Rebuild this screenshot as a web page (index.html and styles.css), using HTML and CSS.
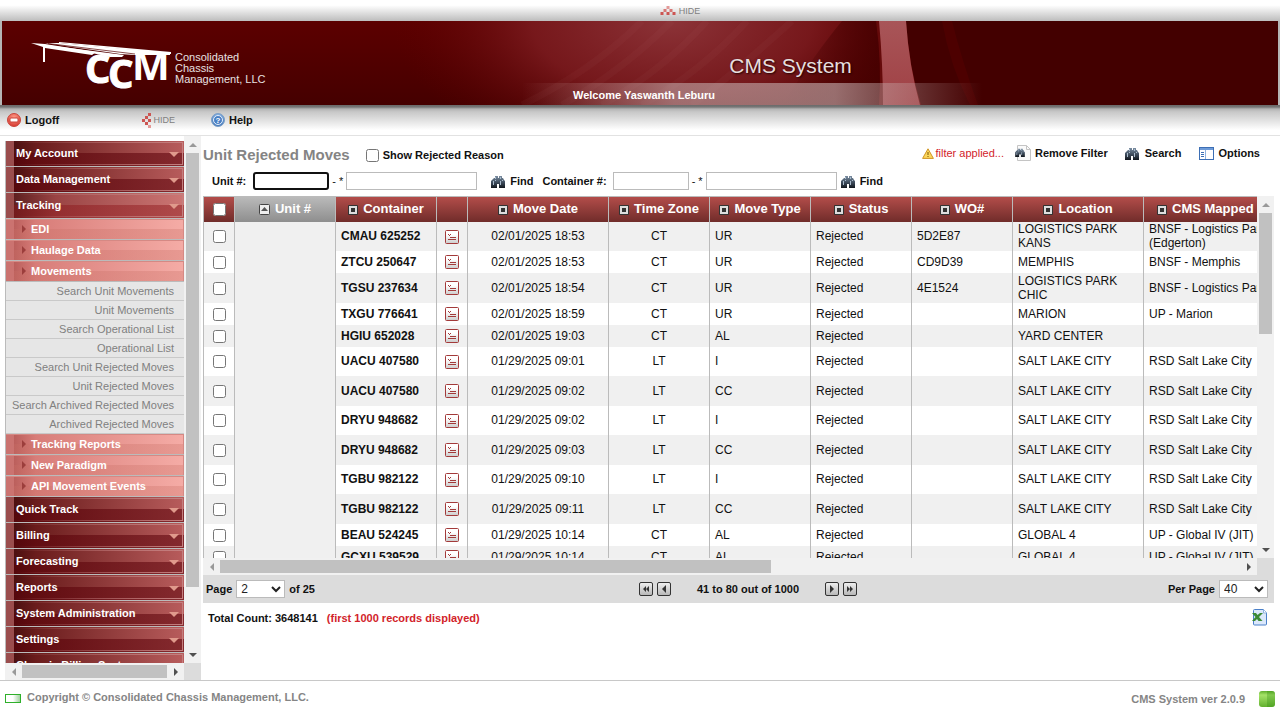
FILE: index.html
```html
<!DOCTYPE html>
<html lang="en">
<head>
<meta charset="utf-8">
<title>CMS System - Unit Rejected Moves</title>
<link rel="stylesheet" href="styles.css">
</head>
<body>
<svg class="defs" aria-hidden="true">
  <defs>
    <linearGradient id="gBin" x1="0" y1="0" x2="0" y2="1"><stop offset="0" stop-color="#7c8fa3"/><stop offset=".55" stop-color="#3c4a5a"/><stop offset="1" stop-color="#10151b"/></linearGradient>
    <linearGradient id="gPaper" x1="0" y1="0" x2="0" y2="1"><stop offset=".3" stop-color="#fff"/><stop offset="1" stop-color="#ccc"/></linearGradient>
    <radialGradient id="gRed" cx=".5" cy=".3" r=".7"><stop offset="0" stop-color="#ff9a88"/><stop offset="1" stop-color="#d63a30"/></radialGradient>
    <radialGradient id="gBlue" cx=".5" cy=".3" r=".7"><stop offset="0" stop-color="#9cc3ee"/><stop offset="1" stop-color="#3d74b8"/></radialGradient>
  </defs>
  <symbol id="bin" viewBox="0 0 14 13">
    <path fill="url(#gBin)" d="M4 1h3v2h1V1h3v2h1l1 2 1 1v7H8V9H6v4H0V6l1-1 2-2h1z"/>
    <path fill="#a9bacb" d="M4 2h1v2H4zM9 2h1v2H9zM2 6h1v4H2zM9 6h1v4H9zM4 5h1v1H4zM11 5h1v1h-1z"/>
    <path fill="#fff" d="M6 10h2v3H6z"/>
  </symbol>
  <symbol id="note" viewBox="0 0 14 14">
    <rect x=".5" y=".5" width="13" height="13" rx="1" fill="url(#gPaper)" stroke="#a33a3a"/>
    <path d="M3 4.500h1M5 4.500h1M4 5.500h1M5 7.500h6M3 9.500h8" stroke="#a33a3a"/>
  </symbol>
  <symbol id="sort" viewBox="0 0 10 10">
    <rect width="10" height="10" rx="1" fill="#333"/><rect x="1" y="1" width="8" height="8" fill="#ddd"/><rect x="3" y="3" width="4" height="4" fill="#333"/>
  </symbol>
</svg>

<div class="topbar">
  <button class="hide-btn" type="button"><svg width="16" height="9" viewBox="0 0 15 9" fill="#cc5552"><path d="M6 0h3v3H6z" fill="#e39a98"/><path d="M3 3h3v3H3zM9 3h3v3H9z" fill="#d77876"/><path d="M0 6h3v3H0zM6 6h3v3H6zM12 6h3v3h-3z"/></svg>HIDE</button>
</div>

<header class="banner">
  <svg class="banner-art" viewBox="0 0 1276 84" preserveAspectRatio="none" aria-hidden="true">
    <defs>
      <linearGradient id="bBase" x1="0" y1="0" x2="0" y2="1"><stop offset="0" stop-color="#5c0000"/><stop offset="1" stop-color="#450000"/></linearGradient>
      <radialGradient id="bGlow" cx=".5" cy=".5" r=".5"><stop offset="0" stop-color="#8c3338"/><stop offset=".5" stop-color="#7c1c20" stop-opacity=".85"/><stop offset="1" stop-color="#600000" stop-opacity="0"/></radialGradient>
      <linearGradient id="bRight" x1="0" x2="1"><stop offset="0" stop-color="#430000" stop-opacity="0"/><stop offset=".25" stop-color="#430000"/><stop offset="1" stop-color="#430000"/></linearGradient>
      <linearGradient id="bBar" x1="0" x2="1"><stop offset="0" stop-color="#c9a5a5" stop-opacity="0"/><stop offset=".33" stop-color="#c9b5b5" stop-opacity=".55"/><stop offset=".68" stop-color="#c9b5b5" stop-opacity=".6"/><stop offset="1" stop-color="#c9b5b5" stop-opacity="0"/></linearGradient>
      <linearGradient id="bRib" x1="0" y1="0" x2="0" y2="1"><stop offset="0" stop-color="#a85558"/><stop offset="1" stop-color="#a04044"/></linearGradient>
    </defs>
    <rect width="1276" height="84" fill="url(#bBase)"/>
    <ellipse cx="670" cy="0" rx="280" ry="150" fill="url(#bGlow)"/>
    <g fill="none" stroke="#c07074" stroke-opacity=".06" stroke-width="7"><path d="M640 0Q590 50 520 84M670 0Q620 50 560 84M705 0Q660 50 600 84M745 0Q700 50 640 84M790 0Q735 50 690 84"/></g>
    <path d="M780 84Q815 30 840 0H1276V84z" fill="url(#bRight)"/>
    <path d="M874 0h30q3 45 15 84h-42q3-40-3-84z" fill="#650a0a"/>
    <path d="M877 0h27q3 45 14 84h-37q0-40-4-84z" fill="url(#bRib)"/>
    <path d="M940 0q8 45 28 84h8Q960 40 950 0z" fill="#5c0000" opacity=".4"/>
    <rect x="520" y="62" width="460" height="22" fill="url(#bBar)"/>
  </svg>
  <svg class="logo" viewBox="0 0 250 64" role="img" aria-label="CCM">
    <g fill="#fff">
      <path d="M1 12 15 13 66 21 62 24 15 17v14h-2V16z"/>
      <path d="M15 12 30 12 140 22v2H104L90 23z"/>
      <path d="M16 14 94 24 92 26H80L62 22 16 16z"/>
      <path d="M29 11 141 21v2L29 12z"/>
      <path d="M18 12.500 105 23" stroke="#560000" stroke-width=".7"/>
      <g class="logo-letters"><text x="55" y="52">C</text><text x="78" y="57">C</text></g>
      <text class="logo-m" x="102" y="49">M</text>
    </g>
    <g class="logo-name"><text x="145" y="30">Consolidated</text><text x="145" y="41">Chassis</text><text x="145" y="52">Management, LLC</text></g>
  </svg>
  <div class="system-name">CMS System</div>
  <div class="welcome">Welcome Yaswanth Leburu</div>
</header>

<nav class="toolbar">
  <div class="toolbar-side">
    <a class="tool" href="#"><svg width="14" height="14" viewBox="0 0 14 14"><circle cx="7" cy="7" r="6.500" fill="url(#gRed)" stroke="#c9453b"/><rect x="3" y="5" width="8" height="4" rx="1" fill="#fff" stroke="#c9453b"/></svg>Logoff</a>
    <button class="hide-btn" type="button"><svg width="9" height="15" viewBox="0 0 9 15" fill="#cc5552"><path d="M0 6h3v3H0z"/><path d="M3 3h3v3H3zM3 9h3v3H3z"/><path d="M6 0h3v3H6zM6 6h3v3H6z"/><path d="M6 12h3v3H6z" fill="#e39a98"/></svg>HIDE</button>
  </div>
  <a class="tool" href="#"><svg width="14" height="14" viewBox="0 0 14 14"><circle cx="7" cy="7" r="6.500" fill="url(#gBlue)" stroke="#7d9fc6"/><circle cx="7" cy="7" r="4.500" fill="#4a80c4" stroke="#e6effa"/><text x="7" y="10" class="q">?</text></svg>Help</a>
</nav>

<div class="body">
  <aside class="sidebar">
    <div class="menu-view">
      <nav class="menu">
        <button class="top" type="button">My Account</button>
        <button class="top" type="button">Data Management</button>
        <button class="top open" type="button">Tracking</button>
        <button class="sub" type="button">EDI</button>
        <button class="sub" type="button">Haulage Data</button>
        <button class="sub" type="button">Movements</button>
        <a href="#">Search Unit Movements</a>
        <a href="#">Unit Movements</a>
        <a href="#">Search Operational List</a>
        <a href="#">Operational List</a>
        <a href="#">Search Unit Rejected Moves</a>
        <a href="#">Unit Rejected Moves</a>
        <a href="#">Search Archived Rejected Moves</a>
        <a href="#">Archived Rejected Moves</a>
        <button class="sub" type="button">Tracking Reports</button>
        <button class="sub" type="button">New Paradigm</button>
        <button class="sub" type="button">API Movement Events</button>
        <button class="top" type="button">Quick Track</button>
        <button class="top" type="button">Billing</button>
        <button class="top" type="button">Forecasting</button>
        <button class="top" type="button">Reports</button>
        <button class="top" type="button">System Administration</button>
        <button class="top" type="button">Settings</button>
        <button class="top" type="button">Chassis Billing System</button>
      </nav>
    </div>
    <div class="vbar"><i class="up dim"></i><span class="track side-v"><b></b></span><i class="down"></i></div>
    <div class="hbar"><i class="left dim"></i><span class="track side-h"><b></b></span><i class="right"></i></div>
    <div class="corner"></div>
  </aside>

  <main>
    <div class="heading">
      <h1>Unit Rejected Moves</h1>
      <label class="show"><input type="checkbox">Show Rejected Reason</label>
      <div class="actions">
        <span class="filter"><svg width="12" height="11" viewBox="0 0 12 11"><path d="M6 .8 11.400 10.400H.6z" fill="#fbd75b" stroke="#cf9426"/><path d="M5.500 4h1v3h-1zM5.500 8h1v1h-1z" fill="#7a5200"/></svg>filter applied...</span>
        <a class="act-remove" href="#"><svg width="16" height="16" viewBox="0 0 16 16"><path d="M2.500.5h9l4 4v11h-13z" fill="#fafafa" stroke="#c4c4c4"/><path d="M11.500.5v4h4" fill="none" stroke="#c4c4c4"/><use href="#bin" x="0" y="3" width="10" height="9"/></svg>Remove Filter</a>
        <a class="act-search" href="#"><svg width="14" height="13"><use href="#bin"/></svg>Search</a>
        <a class="act-options" href="#"><svg width="15" height="13" viewBox="0 0 15 13"><rect x=".5" y=".5" width="14" height="12" fill="#fff" stroke="#3d6fb5"/><path d="M1 1h13v2H1z" fill="#6e9bd8"/><path d="M6.500 3v9" stroke="#8fb2e0"/><path d="M2 5.500h3M2 7.500h3M2 9.500h3" stroke="#3d6fb5"/></svg>Options</a>
      </div>
    </div>
    <form class="finder">
      <label for="u1">Unit #:</label><input class="short focus" id="u1" type="text"><span>- *</span><input class="long" type="text" aria-label="Unit number">
      <button class="find gap" type="button"><svg width="14" height="13"><use href="#bin"/></svg>Find</button>
      <label class="c-label" for="c1">Container #:</label><input class="short" id="c1" type="text"><span>- *</span><input class="long" type="text" aria-label="Container number">
      <button class="find" type="button"><svg width="14" height="13"><use href="#bin"/></svg>Find</button>
    </form>

    <div class="grid">
      <div class="grid-view">
        <table>
          <colgroup><col class="w-check"><col class="w-std"><col class="w-std"><col class="w-note"><col class="w-date"><col class="w-std"><col class="w-std"><col class="w-std"><col class="w-std"><col class="w-loc"><col class="w-map"></colgroup>
          <thead><tr>
            <th><input type="checkbox" aria-label="Select all"></th>
            <th class="sorted"><svg width="11" height="11" viewBox="0 0 11 11"><rect x=".5" y=".5" width="10" height="10" rx="1" fill="#eee" stroke="#444"/><path d="M2 7 5.500 3 9 7z" fill="#555"/></svg>Unit #</th>
            <th><svg width="10" height="10"><use href="#sort"/></svg>Container</th>
            <th></th>
            <th><svg width="10" height="10"><use href="#sort"/></svg>Move Date</th>
            <th><svg width="10" height="10"><use href="#sort"/></svg>Time Zone</th>
            <th><svg width="10" height="10"><use href="#sort"/></svg>Move Type</th>
            <th><svg width="10" height="10"><use href="#sort"/></svg>Status</th>
            <th><svg width="10" height="10"><use href="#sort"/></svg>WO#</th>
            <th><svg width="10" height="10"><use href="#sort"/></svg>Location</th>
            <th class="mapped"><svg width="10" height="10"><use href="#sort"/></svg>CMS Mapped</th>
          </tr></thead>
          <tbody>
            <tr class="h29"><td><input type="checkbox" aria-label="Select row"></td><td></td><td>CMAU 625252</td><td><svg width="14" height="14"><use href="#note"/></svg></td><td>02/01/2025 18:53</td><td>CT</td><td>UR</td><td>Rejected</td><td>5D2E87</td><td>LOGISTICS PARK KANS</td><td>BNSF - Logistics Park<br>(Edgerton)</td></tr>
            <tr><td><input type="checkbox" aria-label="Select row"></td><td></td><td>ZTCU 250647</td><td><svg width="14" height="14"><use href="#note"/></svg></td><td>02/01/2025 18:53</td><td>CT</td><td>UR</td><td>Rejected</td><td>CD9D39</td><td>MEMPHIS</td><td>BNSF - Memphis</td></tr>
            <tr class="h30"><td><input type="checkbox" aria-label="Select row"></td><td></td><td>TGSU 237634</td><td><svg width="14" height="14"><use href="#note"/></svg></td><td>02/01/2025 18:54</td><td>CT</td><td>UR</td><td>Rejected</td><td>4E1524</td><td>LOGISTICS PARK CHIC</td><td>BNSF - Logistics Park</td></tr>
            <tr><td><input type="checkbox" aria-label="Select row"></td><td></td><td>TXGU 776641</td><td><svg width="14" height="14"><use href="#note"/></svg></td><td>02/01/2025 18:59</td><td>CT</td><td>UR</td><td>Rejected</td><td></td><td>MARION</td><td>UP - Marion</td></tr>
            <tr><td><input type="checkbox" aria-label="Select row"></td><td></td><td>HGIU 652028</td><td><svg width="14" height="14"><use href="#note"/></svg></td><td>02/01/2025 19:03</td><td>CT</td><td>AL</td><td>Rejected</td><td></td><td>YARD CENTER</td><td></td></tr>
            <tr class="h29"><td><input type="checkbox" aria-label="Select row"></td><td></td><td>UACU 407580</td><td><svg width="14" height="14"><use href="#note"/></svg></td><td>01/29/2025 09:01</td><td>LT</td><td>I</td><td>Rejected</td><td></td><td>SALT LAKE CITY</td><td>RSD Salt Lake City</td></tr>
            <tr class="h30"><td><input type="checkbox" aria-label="Select row"></td><td></td><td>UACU 407580</td><td><svg width="14" height="14"><use href="#note"/></svg></td><td>01/29/2025 09:02</td><td>LT</td><td>CC</td><td>Rejected</td><td></td><td>SALT LAKE CITY</td><td>RSD Salt Lake City</td></tr>
            <tr class="h29"><td><input type="checkbox" aria-label="Select row"></td><td></td><td>DRYU 948682</td><td><svg width="14" height="14"><use href="#note"/></svg></td><td>01/29/2025 09:02</td><td>LT</td><td>I</td><td>Rejected</td><td></td><td>SALT LAKE CITY</td><td>RSD Salt Lake City</td></tr>
            <tr class="h30"><td><input type="checkbox" aria-label="Select row"></td><td></td><td>DRYU 948682</td><td><svg width="14" height="14"><use href="#note"/></svg></td><td>01/29/2025 09:03</td><td>LT</td><td>CC</td><td>Rejected</td><td></td><td>SALT LAKE CITY</td><td>RSD Salt Lake City</td></tr>
            <tr class="h29"><td><input type="checkbox" aria-label="Select row"></td><td></td><td>TGBU 982122</td><td><svg width="14" height="14"><use href="#note"/></svg></td><td>01/29/2025 09:10</td><td>LT</td><td>I</td><td>Rejected</td><td></td><td>SALT LAKE CITY</td><td>RSD Salt Lake City</td></tr>
            <tr class="h30"><td><input type="checkbox" aria-label="Select row"></td><td></td><td>TGBU 982122</td><td><svg width="14" height="14"><use href="#note"/></svg></td><td>01/29/2025 09:11</td><td>LT</td><td>CC</td><td>Rejected</td><td></td><td>SALT LAKE CITY</td><td>RSD Salt Lake City</td></tr>
            <tr><td><input type="checkbox" aria-label="Select row"></td><td></td><td>BEAU 524245</td><td><svg width="14" height="14"><use href="#note"/></svg></td><td>01/29/2025 10:14</td><td>CT</td><td>AL</td><td>Rejected</td><td></td><td>GLOBAL 4</td><td>UP - Global IV (JIT)</td></tr>
            <tr><td><input type="checkbox" aria-label="Select row"></td><td></td><td>GCXU 539529</td><td><svg width="14" height="14"><use href="#note"/></svg></td><td>01/29/2025 10:14</td><td>CT</td><td>AL</td><td>Rejected</td><td></td><td>GLOBAL 4</td><td>UP - Global IV (JIT)</td></tr>
          </tbody>
        </table>
      </div>
      <div class="vbar"><i class="up dim"></i><span class="track grid-v"><b></b></span><i class="down"></i></div>
      <div class="hbar"><i class="left dim"></i><span class="track grid-h"><b></b></span><i class="right"></i></div>
      <div class="corner"></div>
    </div>

    <div class="pager">
      <div class="page-pick"><label for="pg">Page</label><select id="pg"><option>2</option></select><span>of 25</span></div>
      <div class="page-nav">
        <button type="button" aria-label="First page"><svg width="8" height="8" viewBox="0 0 8 8"><path d="M4 1v6L1 4zM7 1v6L4 4z"/></svg></button>
        <button type="button" aria-label="Previous page"><svg width="8" height="8" viewBox="0 0 8 8"><path d="M6 0v8L2 4z"/></svg></button>
        <span>41 to 80 out of 1000</span>
        <button type="button" aria-label="Next page"><svg width="8" height="8" viewBox="0 0 8 8"><path d="M2 0v8l4-4z"/></svg></button>
        <button type="button" aria-label="Last page"><svg width="8" height="8" viewBox="0 0 8 8"><path d="M1 1v6l3-3zM4 1v6l3-3z"/></svg></button>
      </div>
      <div class="per-page"><label for="pp">Per Page</label><select id="pp"><option>40</option></select></div>
    </div>

    <div class="totals">
      <span>Total Count: 3648141</span><span class="note">(first 1000 records displayed)</span>
      <a href="#" aria-label="Export to Excel"><svg width="16" height="17" viewBox="0 0 16 17"><path d="M1.500 1.500Q1.500.5 2.500.5h9l3 3.500v11q0 1-1 1h-11q-1 0-1-1z" fill="#dbe8fb" stroke="#4a80c9"/><path d="M11.500.5v3.500h3" fill="#fff" stroke="#8fb2e0"/><path d="M0 4h4l1.500 2L8 4h3L7 8l3.500 4h-4L5 10l-2 2H0l3.500-4z" fill="#3c8a35"/></svg></a>
    </div>
  </main>
</div>

<footer>
  <svg width="16" height="9" viewBox="0 0 16 9"><defs><linearGradient id="gBat"><stop offset=".5" stop-color="#fff"/><stop offset="1" stop-color="#9ccf9a"/></linearGradient></defs><rect x=".5" y=".5" width="15" height="8" fill="url(#gBat)" stroke="#2fb02b"/></svg>
  <span class="copyright">Copyright © Consolidated Chassis Management, LLC.</span>
  <span class="version">CMS System ver 2.0.9</span>
  <svg width="16" height="16" viewBox="0 0 16 16"><defs><linearGradient id="gOk" x1="0" y1="0" x2="0" y2="1"><stop offset="0" stop-color="#5fae2c"/><stop offset=".25" stop-color="#a5e368"/><stop offset="1" stop-color="#62b02f"/></linearGradient></defs><rect width="16" height="16" rx="3" fill="url(#gOk)"/><path d="M8 0h5q3 0 3 3v10q0 3-3 3H8z" fill="#2d8a10" opacity=".3"/></svg>
</footer>
</body>
</html>
```

FILE: styles.css
```css
* { box-sizing: border-box; }
body {
  margin: 0;
  min-height: 100vh;
  display: flex;
  flex-direction: column;
  background: #fff;
  color: #111;
  font: bold 11px/14px "Liberation Sans", Arial, sans-serif;
}
a { color: inherit; text-decoration: none; }
button { font: inherit; color: inherit; background: none; border: 0; padding: 0; }
svg { display: block; flex: none; }
.defs { position: absolute; width: 0; height: 0; }

/* top bar and banner */
.topbar {
  height: 21px;
  display: flex;
  justify-content: center;
  align-items: center;
  padding-left: 80px;
  background: linear-gradient(#fff 25%, #bdbdbd);
}
.hide-btn { display: flex; align-items: center; gap: 3px; color: #808080; font-weight: normal; font-size: 9px; }
.banner {
  position: relative;
  display: grid;
  grid-template-rows: 62px 22px;
  margin: 0 2px;
  box-shadow: 0 0 0 2px #b5b5b5;
  clip-path: inset(0 -2px);
  color: #fff;
}
.banner > * { position: relative; }
.banner > .banner-art { position: absolute; width: 100%; height: 100%; }
.logo { grid-area: 1 / 1 / 3 / 2; width: 250px; height: 64px; margin: 10px 0 0 28px; overflow: visible; }
.logo-letters { font: bold 40px "Open Sans", sans-serif; stroke: #fff; stroke-width: 1px; }
.logo-m { font: bold 40px "Open Sans", sans-serif; }
.logo-name { font: 11px "Liberation Sans", sans-serif; fill: #e8e0e0; }
.system-name {
  grid-area: 1 / 1 / 2 / 2;
  margin-left: 57%;
  padding-top: 33px;
  font-weight: normal;
  font-size: 21px;
  line-height: 24px;
  color: #e6dede;
  text-shadow: 1px 1px 2px #200;
}
.welcome { grid-area: 2 / 1 / 3 / 2; text-align: center; padding-left: 8px; line-height: 24px; }

/* toolbar */
.toolbar {
  height: 31px;
  display: flex;
  align-items: center;
  border-bottom: 1px solid #e2e2e2;
  background: linear-gradient(#6a6a6a 0, #777 2px, #b4b4b4 4px, #c8c8c8 7px, #fff 25px);
}
.toolbar-side { width: 211px; display: flex; align-items: center; justify-content: space-between; padding: 0 36px 0 7px; }
.toolbar-side .hide-btn { gap: 2px; }
.tool { display: flex; align-items: center; gap: 4px; }
.q { font: bold 8px "Liberation Sans", sans-serif; fill: #fff; text-anchor: middle; }

/* scrollbars */
.body { flex: 1; display: flex; min-height: 0; }
.vbar, .hbar { display: flex; background: #f1f1f1; }
.vbar { flex-direction: column; padding: 0 2px; }
.hbar { padding: 2px 0; }
.track { flex: 1; display: flex; }
.vbar .track { flex-direction: column; }
.track b { background: #c1c1c1; }
.side-v b { height: 88%; }
.side-h b { width: 100%; }
.grid-v b { height: 37%; }
.grid-h b { width: 54%; }
.corner { background: #dcdcdc; }
.vbar i, .hbar i { display: flex; align-items: center; justify-content: center; flex: 0 0 17px; }
.vbar i::before, .hbar i::before { content: ""; border: 4px solid transparent; }
.vbar .up::before { border-top: 0; border-bottom-color: #505050; }
.vbar .down::before { border-bottom: 0; border-top-color: #505050; }
.hbar .left::before { border-left: 0; border-right-color: #505050; }
.hbar .right::before { border-right: 0; border-left-color: #505050; }
.dim { opacity: .55; }

/* sidebar */
.sidebar {
  flex: none;
  width: 201px;
  padding-left: 5px;
  display: grid;
  grid-template: minmax(0, 1fr) 17px / minmax(0, 1fr) 17px;
}
.menu-view { padding-top: 5px; overflow: hidden; height: calc(100vh - 193px); }
.menu { display: flex; flex-direction: column; border-left: 1px solid #bbb; }
.menu button { text-align: left; color: #fff; position: relative; flex: none; border-bottom: 1px solid #bbb; }
.menu .top {
  height: 26px;
  padding: 0 0 2px 10px;
  background:
    linear-gradient(90deg, #9a4d4d 8px, transparent 8px),
    linear-gradient(transparent 50%, rgba(90, 0, 8, .55) 50%),
    linear-gradient(90deg, #4c1010 8px, #6a1c1c 30px, #b85c5c);
}
.menu .top.open {
  background:
    linear-gradient(90deg, #9a4d4d 8px, transparent 8px),
    linear-gradient(transparent 50%, rgba(140, 20, 24, .45) 50%),
    linear-gradient(90deg, #5e2020 8px, #9a4444 50px, #cc7674);
}
.top::before {
  content: "";
  position: absolute;
  inset: 1px 1px 1px 8px;
  border: 1px solid;
  border-color: #c48080;
  border-left: 0;
  mask-image: linear-gradient(90deg, transparent, #000);
}
.top::after {
  content: "";
  position: absolute;
  right: 5px;
  top: 11px;
  border: 5px solid transparent;
  border-top-color: #e09a8c;
  border-bottom: 0;
}
.menu .sub {
  height: 21px;
  padding-left: 25px;
  background:
    linear-gradient(90deg, #cb7370 8px, transparent 8px),
    linear-gradient(transparent 50%, rgba(200, 110, 100, .3) 50%),
    linear-gradient(90deg, #bb5f5c 8px, #d87d79 30px, #f5aca6);
  box-shadow: inset -1px 1px #d58984;
}
.sub::after {
  content: "";
  position: absolute;
  left: 16px;
  top: 6px;
  border: 4px solid transparent;
  border-left-color: #9c3e3c;
  border-right: 0;
}
.menu a {
  flex: none;
  height: 19px;
  padding-right: 10px;
  border-bottom: 1px solid #c9c9c9;
  background: #e6e6e6;
  color: #808080;
  font-weight: normal;
  line-height: 18px;
  text-align: right;
  white-space: nowrap;
}

/* main */
main { flex: 1; min-width: 0; padding: 0 6px 0 2px; }
.heading { height: 36px; display: flex; align-items: center; padding-top: 2px; }
h1 { margin: 0; font-size: 15px; line-height: 18px; color: #848484; }
input[type="checkbox"] { margin: 0; width: 13px; height: 13px; display: block; }
.show { display: flex; align-items: center; gap: 4px; margin-left: 16px; }
.actions { margin-left: auto; display: flex; align-items: center; padding: 0 14px 4px 0; }
.actions > * { display: flex; align-items: center; }
.filter { color: #d2232a; font-weight: normal; gap: 2px; }
.act-remove { gap: 4px; margin-left: 11px; }
.act-search { gap: 6px; margin-left: 17px; }
.act-options { gap: 4px; margin-left: 18px; }
.finder { height: 24px; display: flex; align-items: center; padding: 0 0 6px 9px; white-space: nowrap; }
.finder input { height: 18px; border: 1px solid #bbb; background: #fff; padding: 0 2px; }
.finder span { width: 17px; text-align: center; font-weight: normal; flex: none; }
.finder .short { width: 76px; margin-left: 6px; }
.finder .long { width: 131px; }
.finder .focus { border: 2px solid #111; border-radius: 3px; margin-left: 7px; }
.find { display: flex; align-items: center; gap: 5px; margin-left: 4px; }
.find.gap { margin-left: 14px; }
.c-label { margin-left: 9px; }

.grid { display: grid; grid-template: auto 17px / minmax(0, 1fr) 17px; }
.grid-view { overflow: hidden; height: calc(100vh - 358px); border-top: 1px solid #bbb; border-left: 1px solid #bbb; }
table { table-layout: fixed; border-collapse: separate; border-spacing: 0; width: 1091px; font-size: 12px; }
.w-check, .w-note { width: 31px; }
.w-std { width: 101px; }
.w-date { width: 141px; }
.w-loc { width: 131px; }
.w-map { width: 151px; }
th { height: 25px; padding: 0 0 2px; border-right: 1px solid #bbb; background: linear-gradient(#b34d4a, #702c2a); color: #fff; font-size: 13px; white-space: nowrap; }
th:first-child { padding: 0; }
th.sorted { background: linear-gradient(#bababa, #8e8e8e); }
th.mapped { text-align: left; padding-left: 13px; }
th svg { display: inline-block; margin-right: 5px; vertical-align: -2px; }
th input[type="checkbox"], td input[type="checkbox"] { margin: 0 auto; }
td { height: 22px; padding: 0 5px 1px; border-right: 1px solid #bbb; font-weight: normal; line-height: 14px; }
tr.h29 td { height: 29px; }
tr.h30 td { height: 30px; }
tbody tr:nth-child(odd), td:nth-child(2) { background: #f0f0f0; }
td:nth-child(1), td:nth-child(4) { padding: 0; }
td:nth-child(3) { font-weight: bold; }
td:nth-child(5), td:nth-child(6) { text-align: center; }
td:last-child { white-space: nowrap; }
td svg { margin: 0 auto; }

.pager { min-height: 28px; display: grid; grid-template-columns: 1fr auto 1fr; align-items: center; background: #dcdcdc; padding: 0 6px 0 3px; }
.pager select { width: 49px; height: 18px; margin: 0; padding: 0; border: 1px solid #bbb; border-radius: 0; background: #fff; color: #222; font: 12px "Liberation Sans", sans-serif; }
.page-pick, .per-page, .page-nav { display: flex; align-items: center; gap: 4px; }
.per-page { justify-content: flex-end; }
.page-nav { padding-left: 22px; }
.page-nav span { margin: 0 22px; }
.page-nav button { width: 14px; height: 14px; display: flex; align-items: center; justify-content: center; border: 1px solid #333; border-radius: 2px; background: linear-gradient(#eee, #b8b8b8); }
.page-nav path { fill: #333; }
.totals { display: flex; align-items: center; padding: 6px 6px 0 5px; }
.note { color: #d2232a; margin-left: 9px; }
.totals a { margin-left: auto; }

footer { height: 40px; border-top: 1px solid #c8c8c8; display: flex; align-items: center; gap: 6px; padding: 0 5px 4px; color: #858585; }
.copyright { padding-bottom: 3px; }
.version { margin-left: auto; padding-right: 8px; }
```
